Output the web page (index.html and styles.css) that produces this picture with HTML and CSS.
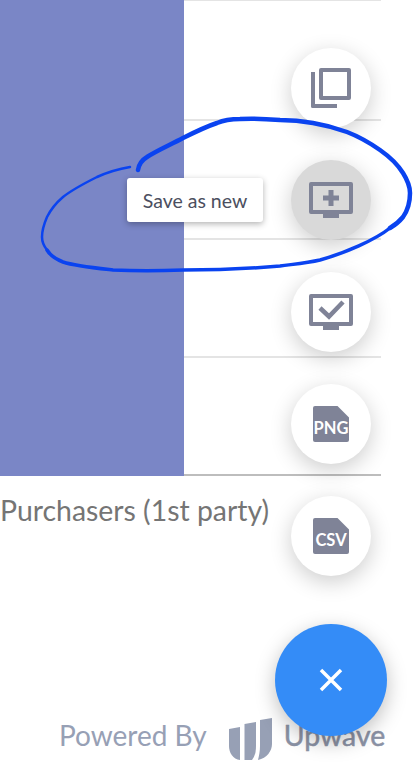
FILE: index.html
```html
<!DOCTYPE html>
<html lang="en">
<head>
    <meta charset="UTF-8">
    <meta name="viewport" content="width=device-width, initial-scale=1.0">
    <title>Export menu</title>
    <link rel="stylesheet" href="styles.css">
</head>
<body>
    <div class="chart">
        <div class="bar"></div>
        <div class="row"></div>
        <div class="row"></div>
        <div class="row"></div>
        <div class="row row-last"></div>
    </div>
    <p class="chart-label">Purchasers (1st party)</p>

    <footer class="powered">
        <span class="powered-by">Powered By</span>
        <svg class="logo" viewBox="0 0 43 42" width="43" height="42">
            <path d="M0 11 L11 9 V42 C4 41 0 35 0 28 Z"/>
            <path d="M15.500 6 L27 4 V28 C27 34 26 38 23 42 H15.500 Z"/>
            <path d="M31 2 L43 0 V26 C43 33 38 40 29 42 C30 38 31 33 31 28 Z"/>
        </svg>
        <span class="brand">Upwave</span>
    </footer>

    <div class="actions">
        <button class="fab">
            <svg viewBox="0 0 40 40" width="40" height="40">
                <path class="ico" d="M0 4 H4 V36 H26 V40 H1.500 Q0 40 0 38.500 Z"/>
                <path class="ico" fill-rule="evenodd" d="M10 0 H38 Q40 0 40 2 V30 Q40 32 38 32 H10 Q8 32 8 30 V2 Q8 0 10 0 Z M12 4 V28 H36 V4 Z"/>
            </svg>
        </button>
        <div class="action-row">
            <span class="tooltip">Save as new</span>
            <button class="fab fab-active">
                <svg viewBox="0 0 44 36" width="44" height="36">
                    <path class="ico" fill-rule="evenodd" d="M2 0 H42 Q44 0 44 2 V30 Q44 32 42 32 H30 V36 H14 V32 H2 Q0 32 0 30 V2 Q0 0 2 0 Z M4 4 V28 H40 V4 Z"/>
                    <path class="ico" d="M19.500 8 H24.500 V13.500 H30 V18.500 H24.500 V24 H19.500 V18.500 H14 V13.500 H19.500 Z"/>
                </svg>
            </button>
        </div>
        <button class="fab">
            <svg viewBox="0 0 44 36" width="44" height="36">
                <path class="ico" fill-rule="evenodd" d="M2 0 H42 Q44 0 44 2 V30 Q44 32 42 32 H30 V36 H14 V32 H2 Q0 32 0 30 V2 Q0 0 2 0 Z M4 4 V28 H40 V4 Z"/>
                <path class="ico-line" d="M11 14 L20 22.500 L34 8"/>
            </svg>
        </button>
        <button class="fab">
            <span class="file"><span class="file-type">PNG</span></span>
        </button>
        <button class="fab">
            <span class="file"><span class="file-type">CSV</span></span>
        </button>
        <button class="fab-close">
            <svg viewBox="0 0 24 24" width="24" height="24">
                <path d="M2 2 L22 22 M22 2 L2 22"/>
            </svg>
        </button>
    </div>

    <svg class="scribble" viewBox="0 0 414 778" width="414" height="778">
        <path class="stroke-thick" d="M138 170 C139 163 142 160 147 157 C158 150 170 145 183 138 C195 132 205 127 217 123 C224 120 232 119 240 119 C255 118 268 119 280 120 C292 120 302 121 313 123 C325 125 336 128 347 132 C360 137 370 143 380 150 C390 157 398 165 403 173 C408 181 410 187 410 193 C410 202 408 210 403 217 C399 222 395 225 390 228"/>
        <path class="stroke-mid" d="M390 228 C375 240 345 253 320 260 C307 263 295 264 280 266 C245 269 215 270 183 270 C158 271 135 271 113 270 C95 268 75 266 63 262 C55 259 50 255 47 250"/>
        <path class="stroke-thin" d="M47 250 C43 245 42 241 42 237 C42 230 44 224 47 217 C51 209 56 203 63 197 C73 189 85 183 97 177 C108 172 118 169 130 167"/>
    </svg>
</body>
</html>
```

FILE: styles.css
```css
* {
    box-sizing: border-box;
}

html, body {
    margin: 0;
    padding: 0;
}

body {
    position: relative;
    width: 414px;
    height: 778px;
    overflow: hidden;
    background-color: #fff;
    font-family: Lato, 'Open Sans', sans-serif;
}

button {
    font-family: inherit;
}

.chart {
    position: relative;
    width: 381px;
    height: 476px;
    padding-top: 1.500px;
    border-top: 1px solid #e4e4e4;
}

.bar {
    position: absolute;
    left: 0;
    top: -1px;
    height: 476px;
    width: 184px;
    background-color: #7a86c6;
}

.row {
    height: 118.500px;
    border-bottom: 2px solid #e4e4e4;
}

.row-last {
    height: 118px;
    border-bottom-color: #bdbdbd;
}

.chart-label {
    margin: 18px 0 0 0;
    font-size: 28.400px;
    line-height: 32px;
    color: #757575;
}

.powered {
    position: absolute;
    left: 59px;
    top: 718px;
    width: 328px;
    height: 42px;
    display: flex;
    align-items: center;
}

.powered-by {
    margin-bottom: 8px;
    font-size: 28px;
    color: #97a0b5;
}

.logo {
    margin-left: 22px;
    fill: #97a0b5;
}

.brand {
    margin-left: 12px;
    margin-bottom: 8px;
    font-size: 28.400px;
    -webkit-text-stroke: 0.500px #8b92a5;
    color: #8b92a5;
}

.actions {
    position: absolute;
    left: 275px;
    top: 48px;
    width: 112px;
    display: flex;
    flex-direction: column;
    align-items: center;
    gap: 32px;
}

.action-row {
    position: relative;
}

.fab {
    width: 80px;
    height: 80px;
    padding: 0;
    border: none;
    border-radius: 50%;
    background-color: #fff;
    box-shadow: 0 6px 22px rgba(0, 0, 0, 0.2);
    display: flex;
    align-items: center;
    justify-content: center;
}

.fab-active {
    background-color: #d9d9d9;
}

.ico {
    fill: #7f8397;
}

.ico-line {
    fill: none;
    stroke: #7f8397;
    stroke-width: 4.500;
}

.tooltip {
    position: absolute;
    right: 108px;
    top: 18px;
    width: 136px;
    height: 44px;
    border-radius: 3px;
    background-color: #fff;
    box-shadow: 0 2px 6px rgba(0, 0, 0, 0.3);
    font-size: 19.500px;
    line-height: 45px;
    text-align: center;
    color: #4c4f60;
}

.file {
    width: 36px;
    height: 36px;
    background-color: #7f8397;
    border-radius: 2px;
    clip-path: polygon(0 0, 68% 0, 100% 32%, 100% 100%, 0 100%);
    display: flex;
    align-items: flex-end;
    justify-content: center;
}

.file-type {
    font-size: 16.500px;
    line-height: 24px;
    padding-bottom: 2px;
    font-weight: 700;
    color: #fff;
}

.fab-close {
    width: 112px;
    height: 112px;
    margin-top: 16px;
    padding: 0;
    border: none;
    border-radius: 50%;
    background-color: #348cf7;
    box-shadow: 0 6px 20px rgba(0, 0, 0, 0.25);
    display: flex;
    align-items: center;
    justify-content: center;
}

.fab-close path {
    fill: none;
    stroke: #fff;
    stroke-width: 3.500;
}

.scribble {
    position: absolute;
    left: 0;
    top: 0;
    pointer-events: none;
}

.scribble path {
    fill: none;
    stroke: #0a43f0;
    stroke-linecap: round;
}

.stroke-thick {
    stroke-width: 4.500;
}

.stroke-mid {
    stroke-width: 3.500;
}

.stroke-thin {
    stroke-width: 2.500;
}
```
